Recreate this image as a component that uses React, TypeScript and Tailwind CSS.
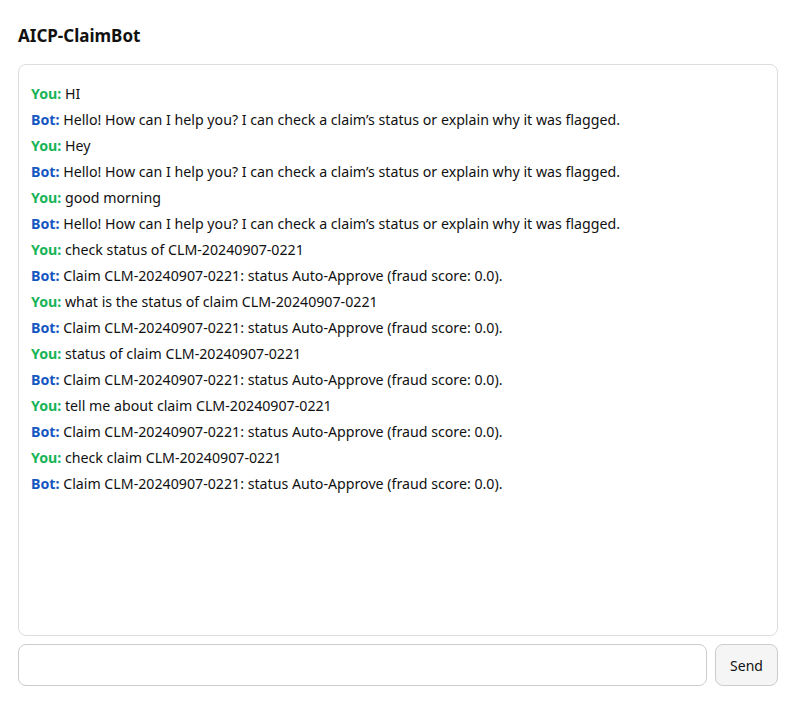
import React, { useState } from "react";

type Msg = { from: "You" | "Bot"; text: string };

const hello =
  "Hello! How can I help you? I can check a claim’s status or explain why it was flagged.";
const approved =
  "Claim CLM-20240907-0221: status Auto-Approve (fraud score: 0.0).";

const initial: Msg[] = [
  { from: "You", text: "HI" },
  { from: "Bot", text: hello },
  { from: "You", text: "Hey" },
  { from: "Bot", text: hello },
  { from: "You", text: "good morning" },
  { from: "Bot", text: hello },
  { from: "You", text: "check status of CLM-20240907-0221" },
  { from: "Bot", text: approved },
  { from: "You", text: "what is the status of claim CLM-20240907-0221" },
  { from: "Bot", text: approved },
  { from: "You", text: "status of claim CLM-20240907-0221" },
  { from: "Bot", text: approved },
  { from: "You", text: "tell me about claim CLM-20240907-0221" },
  { from: "Bot", text: approved },
  { from: "You", text: "check claim CLM-20240907-0221" },
  { from: "Bot", text: approved },
];

export default function App() {
  const [messages, setMessages] = useState<Msg[]>(initial);
  const [input, setInput] = useState("");

  const send = () => {
    if (!input.trim()) return;
    setMessages([...messages, { from: "You", text: input }]);
    setInput("");
  };

  return (
    <div className="min-h-screen bg-white p-[18px] text-[#111] font-['Noto_Sans','Open_Sans',sans-serif]">
      <div className="w-[760px]">
        <h1 className="text-[17px] font-bold leading-[36px] mb-[10px]">AICP-ClaimBot</h1>
        <div className="h-[572px] overflow-y-auto rounded-lg border border-[#dddddd] px-3 pt-4 pb-4">
          {messages.map((m, i) => (
            <div key={i} className="text-[14.2px] leading-[26px]">
              <span
                className={
                  m.from === "You"
                    ? "font-bold text-[#16b455]"
                    : "font-bold text-[#1557c0]"
                }
              >
                {m.from}:
              </span>{" "}
              {m.text}
            </div>
          ))}
        </div>
        <div className="mt-2 flex gap-2">
          <input
            value={input}
            onChange={(e) => setInput(e.target.value)}
            onKeyDown={(e) => e.key === "Enter" && send()}
            className="h-[42px] flex-1 rounded-lg border border-[#cccccc] px-3 text-[14px] outline-none"
          />
          <button
            onClick={send}
            className="h-[42px] w-[63px] rounded-lg border border-[#cccccc] bg-[#f5f5f5] text-[14px]"
          >
            Send
          </button>
        </div>
      </div>
    </div>
  );
}
